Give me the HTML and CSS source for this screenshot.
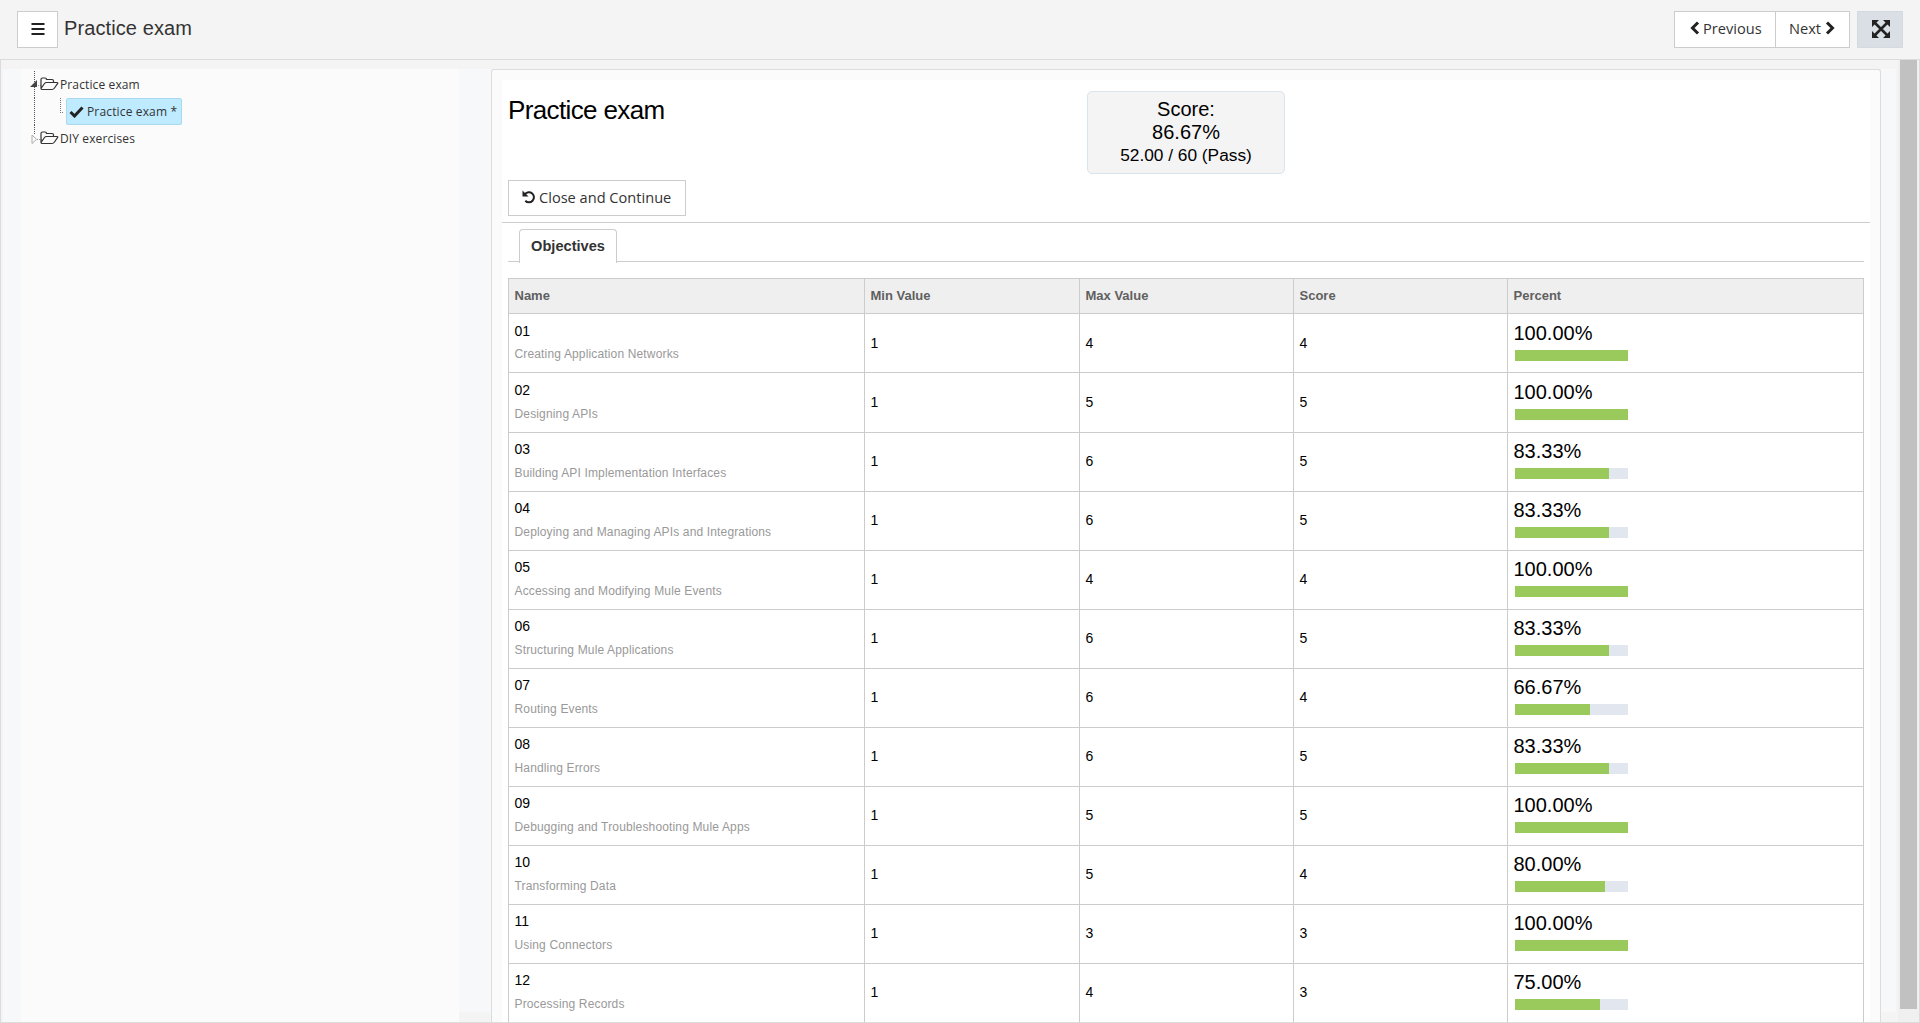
FILE: index.html
```html
<!DOCTYPE html>
<html lang="en">
<head>
<meta charset="utf-8">
<title>Practice exam</title>
<link rel="stylesheet" href="styles.css">
</head>
<body>
<header class="topbar">
  <button class="btn menu-btn" aria-label="Menu"><svg width="14" height="12" viewBox="0 0 14 12"><path d="M.5 1h13M.5 6h13M.5 11h13" stroke="#222" stroke-width="2"/></svg></button>
  <h1 class="topbar-title">Practice exam</h1>
  <div class="pager">
    <button class="btn prev"><svg width="10" height="14" viewBox="0 0 10 14"><path d="M8 1.500 2.500 7 8 12.500" fill="none" stroke="#222" stroke-width="3"/></svg><span>Previous</span></button>
    <button class="btn next"><span>Next</span><svg width="10" height="14" viewBox="0 0 10 14"><path d="M2 1.500 7.500 7 2 12.500" fill="none" stroke="#222" stroke-width="3"/></svg></button>
  </div>
  <button class="btn expand" aria-label="Expand"><svg width="18" height="18" viewBox="0 0 18 18"><path d="M3 3l12 12M15 3 3 15" stroke="#222" stroke-width="2.600"/><path d="M0 0h7L0 7zM18 0v7l-7-7zM0 18v-7l7 7zM18 18h-7l7-7z" fill="#222"/></svg></button>
</header>
<main class="frame">
  <div class="content">
    <nav class="sidebar">
      <ul class="tree">
        <li class="node">
          <svg class="rail" width="12" height="27" viewBox="0 0 12 27"><path d="M4.500 0v27" stroke="#555" stroke-dasharray="1 1"/><path d="M8 14.500h4" stroke="#999" stroke-dasharray="1 1"/><path d="M7 9v7H0z" fill="#444"/></svg>
          <svg class="folder" width="19" height="14" viewBox="0 0 19 14"><path d="M1 11.500V2.500Q1 1 2.500 1H5q1.500 0 1.500 1.500h5.500Q13.500 2.500 13.500 4v1.500M1 11.500 4.500 6.500Q5.200 5.500 6.500 5.500h10.500q1.300 0 .5 1.200L14.500 11q-1 1.500-2.500 1.500H2.300Q1 12.500 1 11.500" fill="none" stroke="#333" stroke-width="1.200"/></svg>
          <span class="wide">Practice exam</span>
        </li>
        <li class="node">
          <svg class="rail" width="12" height="27" viewBox="0 0 12 27"><path d="M4.500 0v27" stroke="#555" stroke-dasharray="1 1"/></svg>
          <svg class="branch" width="22" height="27" viewBox="0 0 22 27"><path d="M18.500 0v14.500" stroke="#777" stroke-dasharray="1 1"/><path d="M18 14.500h5" stroke="#777" stroke-dasharray="1 1"/></svg>
          <span class="selected"><svg width="15" height="12" viewBox="0 0 15 12"><path d="M1.500 6 5.500 10 13.500 1.500" fill="none" stroke="#222" stroke-width="3"/></svg>Practice exam *</span>
        </li>
        <li class="node">
          <svg class="rail" width="12" height="27" viewBox="0 0 12 27"><path d="M4.500 0v10" stroke="#555" stroke-dasharray="1 1"/><path d="M7 14.500h5" stroke="#999" stroke-dasharray="1 1"/><path d="M2 10v8.500l4.500-4.250z" fill="#fff" stroke="#aaa"/></svg>
          <svg class="folder" width="19" height="14" viewBox="0 0 19 14"><path d="M1 11.500V2.500Q1 1 2.500 1H5q1.500 0 1.500 1.500h5.500Q13.500 2.500 13.500 4v1.500M1 11.500 4.500 6.500Q5.200 5.500 6.500 5.500h10.500q1.300 0 .5 1.200L14.500 11q-1 1.500-2.500 1.500H2.300Q1 12.500 1 11.500" fill="none" stroke="#333" stroke-width="1.200"/></svg>
          <span class="wide">DIY exercises</span>
        </li>
      </ul>
    </nav>
    <div class="gutter"></div>
    <section class="panel">
      <div class="report">
        <div class="summary">
          <h2 class="title">Practice exam</h2>
          <div class="score"><div class="big">Score:</div><div class="big">86.67%</div><div class="points">52.00 / 60 (Pass)</div></div>
        </div>
        <div class="actions"><button class="btn close"><svg width="14" height="14" viewBox="0 0 14 14"><path d="M3 4.200A5 5 0 1 1 3.300 10.700" fill="none" stroke="#222" stroke-width="2"/><path d="M.5.500v6h6z" fill="#222"/></svg><span>Close and Continue</span></button></div>
        <div class="tabs"><div class="tab">Objectives</div></div>
        <table class="objectives">
          <colgroup><col class="c-name"><col class="c-min"><col class="c-num"><col class="c-num"><col class="c-pct"></colgroup>
          <thead><tr><th>Name</th><th>Min Value</th><th>Max Value</th><th>Score</th><th>Percent</th></tr></thead>
          <tbody>
            <tr class="low"><td><div class="num">01</div><div class="desc">Creating Application Networks</div></td><td>1</td><td>4</td><td>4</td><td><div class="pct">100.00%</div><div class="bar"><div class="fill" style="width:100%"></div></div></td></tr>
            <tr class="low tall"><td><div class="num">02</div><div class="desc">Designing APIs</div></td><td>1</td><td>5</td><td>5</td><td><div class="pct">100.00%</div><div class="bar"><div class="fill" style="width:100%"></div></div></td></tr>
            <tr><td><div class="num">03</div><div class="desc">Building API Implementation Interfaces</div></td><td>1</td><td>6</td><td>5</td><td><div class="pct">83.33%</div><div class="bar"><div class="fill" style="width:83.33%"></div></div></td></tr>
            <tr><td><div class="num">04</div><div class="desc">Deploying and Managing APIs and Integrations</div></td><td>1</td><td>6</td><td>5</td><td><div class="pct">83.33%</div><div class="bar"><div class="fill" style="width:83.33%"></div></div></td></tr>
            <tr><td><div class="num">05</div><div class="desc">Accessing and Modifying Mule Events</div></td><td>1</td><td>4</td><td>4</td><td><div class="pct">100.00%</div><div class="bar"><div class="fill" style="width:100%"></div></div></td></tr>
            <tr><td><div class="num">06</div><div class="desc">Structuring Mule Applications</div></td><td>1</td><td>6</td><td>5</td><td><div class="pct">83.33%</div><div class="bar"><div class="fill" style="width:83.33%"></div></div></td></tr>
            <tr><td><div class="num">07</div><div class="desc">Routing Events</div></td><td>1</td><td>6</td><td>4</td><td><div class="pct">66.67%</div><div class="bar"><div class="fill" style="width:66.67%"></div></div></td></tr>
            <tr><td><div class="num">08</div><div class="desc">Handling Errors</div></td><td>1</td><td>6</td><td>5</td><td><div class="pct">83.33%</div><div class="bar"><div class="fill" style="width:83.33%"></div></div></td></tr>
            <tr><td><div class="num">09</div><div class="desc">Debugging and Troubleshooting Mule Apps</div></td><td>1</td><td>5</td><td>5</td><td><div class="pct">100.00%</div><div class="bar"><div class="fill" style="width:100%"></div></div></td></tr>
            <tr><td><div class="num">10</div><div class="desc">Transforming Data</div></td><td>1</td><td>5</td><td>4</td><td><div class="pct">80.00%</div><div class="bar"><div class="fill" style="width:80%"></div></div></td></tr>
            <tr><td><div class="num">11</div><div class="desc">Using Connectors</div></td><td>1</td><td>3</td><td>3</td><td><div class="pct">100.00%</div><div class="bar"><div class="fill" style="width:100%"></div></div></td></tr>
            <tr><td><div class="num">12</div><div class="desc">Processing Records</div></td><td>1</td><td>4</td><td>3</td><td><div class="pct">75.00%</div><div class="bar"><div class="fill" style="width:75%"></div></div></td></tr>
          </tbody>
        </table>
      </div>
    </section>
    <div class="gutter-right"></div>
  </div>
  <div class="scrollbar"><div class="thumb"></div></div>
</main>
</body>
</html>
```
FILE: styles.css
```css
* { box-sizing: border-box; }
body {
  margin: 0;
  height: 1023px;
  overflow: hidden;
  display: flex;
  flex-direction: column;
  background: #f4f4f4;
  font-family: "Liberation Sans", Arial, sans-serif;
  color: #000;
}
svg { display: block; flex: none; }
.topbar {
  height: 59px;
  flex: none;
  display: flex;
  align-items: flex-start;
  padding: 11px 17px 0;
}
.btn {
  display: flex;
  align-items: center;
  height: 37px;
  margin: 0;
  padding: 0 0 2px;
  border: 1px solid #ccc;
  background: #fff;
  color: #333;
  font: 14.6px/20px "Open Sans", sans-serif;
  white-space: nowrap;
}
.menu-btn { width: 41px; justify-content: center; }
.topbar-title {
  margin: 3px 0 0 6px;
  font-size: 20px;
  line-height: 28px;
  font-weight: 400;
  letter-spacing: .1px;
  color: #333;
}
.pager { display: flex; margin-left: auto; }
.prev { width: 102px; padding-left: 15px; gap: 3px; }
.next { width: 75px; margin-left: -1px; padding-left: 13px; gap: 4px; }
.prev, .next { padding-bottom: 3px; }
.expand {
  width: 46px;
  margin-left: 7px;
  padding-left: 1px;
  justify-content: center;
  background: #dadfe6;
  border-color: #d5dae1;
}
.frame {
  height: 964px;
  flex: none;
  display: flex;
  border: 1px solid #dcdcdc;
  overflow: hidden;
}
.content {
  flex: 1;
  display: flex;
  padding: 9px 2px 0 2px;
}
.sidebar {
  width: 456px;
  border-left: 18px solid #f7f8fa;
  background: #fbfbfb;
}
.tree { list-style: none; margin: 0; padding: 2px 0 0 9px; }
.node {
  display: flex;
  align-items: center;
  height: 27px;
  font: 12px/16px "Open Sans", sans-serif;
  color: #333;
}
.rail, .branch { height: 27px; }
.folder { margin: 0 1px 2px -2px; }
.branch { margin-right: 2px; }
.wide { letter-spacing: .12px; }
.selected {
  display: flex;
  align-items: center;
  gap: 3px;
  height: 27px;
  width: 116px;
  padding-left: 2px;
  border: 1px solid #a9d9ee;
  border-radius: 2px;
  background: #beebff;
  letter-spacing: .15px;
}
.gutter { width: 32px; height: 943px; background: #f7f8fa; }
.panel {
  width: 1390px;
  padding: 10px;
  border: 1px solid #dcdcdc;
  border-bottom: 0;
  border-radius: 3px 3px 0 0;
  background: #fbfbfb;
}
.report { height: 945px; background: #fff; overflow: hidden; }
.gutter-right { flex: 1; height: 943px; background: #f7f8fa; }
.summary {
  height: 100px;
  display: flex;
  padding: 11px 0 0 6px;
}
.title {
  width: 579px;
  margin: 3px 0 0;
  font-size: 26px;
  line-height: 32px;
  font-weight: 400;
  letter-spacing: -.63px;
}
.score {
  width: 198px;
  height: 83px;
  padding-top: 6px;
  border: 1px solid #dae4ec;
  border-radius: 5px;
  background: #f4f4f4;
  text-align: center;
}
.big { font-size: 20px; line-height: 23px; }
.points { font-size: 17.300px; line-height: 22px; }
.actions { height: 43px; padding-left: 6px; border-bottom: 1px solid #ccc; }
.close { width: 178px; height: 36px; padding-left: 13px; gap: 3px; }
.tabs {
  height: 39px;
  margin: 0 6px;
  padding: 6px 0 0 11px;
  border-bottom: 1px solid #ccc;
}
.tab {
  width: 98px;
  height: 34px;
  border: 1px solid #ccc;
  border-bottom: 0;
  border-radius: 4px 4px 0 0;
  background: #fff;
  font-size: 14.600px;
  line-height: 33px;
  font-weight: 700;
  color: #333;
  text-align: center;
}
.objectives {
  width: 1356px;
  margin: 16px 0 0 6px;
  table-layout: fixed;
  border-collapse: collapse;
}
.c-name { width: 356px; }
.c-min { width: 215px; }
.c-num { width: 214px; }
.c-pct { width: 356px; }
th, td { border: 1px solid #ccc; padding: 0 5.5px; text-align: left; }
th {
  height: 35px;
  padding-bottom: 2px;
  background: #efefef;
  font-size: 13px;
  color: #606060;
}
td { height: 59px; padding-top: 19px; font-size: 14px; line-height: 18px; vertical-align: top; }
td:first-child { padding-top: 7px; }
td:last-child { padding-top: 6px; }
.low td { padding-top: 20px; }
.low td:first-child { padding-top: 8px; }
.low td:last-child { padding-top: 7px; }
.tall td { height: 60px; }
.desc {
  margin-top: 7px;
  font-size: 12px;
  line-height: 16px;
  letter-spacing: .15px;
  color: #999;
}
.low .desc { margin-top: 6px; }
.tall .desc { margin-top: 7px; }
.pct { font-size: 20px; line-height: 24px; }
.bar { width: 113px; height: 11px; margin: 5px 0 0 1.5px; background: #e2e6ee; }
.fill { height: 11px; background: #9aca5c; }
.scrollbar { width: 21px; padding: 0 2px; background: #f0f0f0; }
.thumb { height: 949px; background: #c1c1c1; }
```
